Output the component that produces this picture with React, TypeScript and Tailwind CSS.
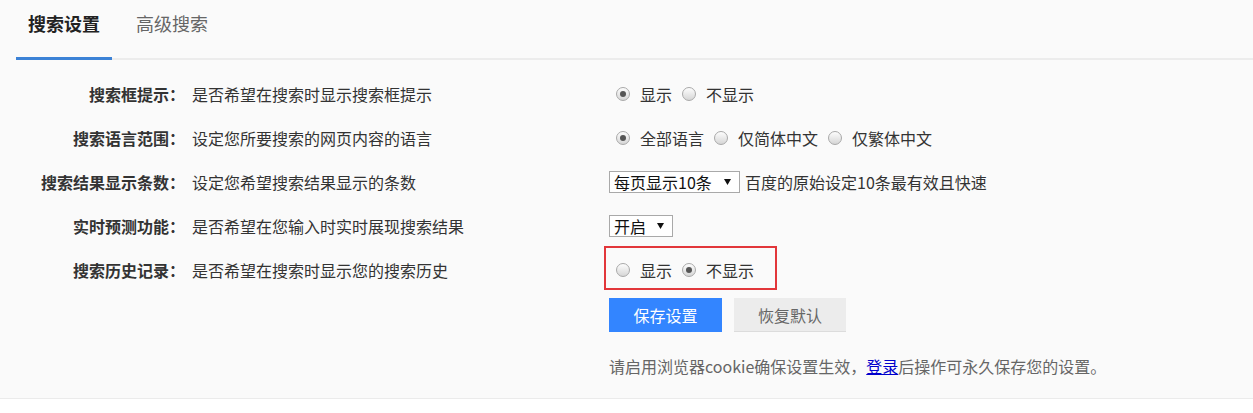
const font = { fontFamily: '"Noto Sans CJK SC", "Noto Sans", sans-serif' };

const Radio = ({ checked }: { checked?: boolean }) => (
  <span className="inline-flex h-[14px] w-[14px] shrink-0 items-center justify-center rounded-full border border-[#a9a9a9] bg-gradient-to-b from-[#fdfdfd] to-[#d6d6d6]">
    {checked && <span className="h-[6px] w-[6px] rounded-full bg-[#555]" />}
  </span>
);

interface Option {
  label: string;
  checked?: boolean;
}

const RadioGroup = ({ options }: { options: Option[] }) => (
  <div className="flex items-center pl-[7px]">
    {options.map((o) => (
      <label key={o.label} className="mr-[10px] flex items-center">
        <Radio checked={o.checked} />
        <span className="ml-[10px] text-[16px] text-[#333]">{o.label}</span>
      </label>
    ))}
  </div>
);

const Arrow = () => (
  <svg width="7" height="6" viewBox="0 0 7 6" className="ml-auto">
    <path d="M0 0 L7 0 L3.5 6 Z" fill="#111" />
  </svg>
);

const FakeSelect = ({ value, width }: { value: string; width: string }) => (
  <div
    className={`flex h-[22px] items-center border border-[#a9a9a9] bg-white pl-[4px] pr-[8px] text-[16px] leading-none text-[#111] ${width}`}
  >
    <span>{value}</span>
    <Arrow />
  </div>
);

interface Row {
  label: string;
  desc: string;
  control: React.ReactNode;
  marked?: boolean;
}

const rows: Row[] = [
  {
    label: "搜索框提示：",
    desc: "是否希望在搜索时显示搜索框提示",
    control: <RadioGroup options={[{ label: "显示", checked: true }, { label: "不显示" }]} />,
  },
  {
    label: "搜索语言范围：",
    desc: "设定您所要搜索的网页内容的语言",
    control: (
      <RadioGroup
        options={[{ label: "全部语言", checked: true }, { label: "仅简体中文" }, { label: "仅繁体中文" }]}
      />
    ),
  },
  {
    label: "搜索结果显示条数：",
    desc: "设定您希望搜索结果显示的条数",
    control: (
      <div className="flex items-center">
        <FakeSelect value="每页显示10条" width="w-[131px]" />
        <span className="ml-[5px] text-[16px] text-[#333]">百度的原始设定10条最有效且快速</span>
      </div>
    ),
  },
  {
    label: "实时预测功能：",
    desc: "是否希望在您输入时实时展现搜索结果",
    control: <FakeSelect value="开启" width="w-[64px]" />,
  },
  {
    label: "搜索历史记录：",
    desc: "是否希望在搜索时显示您的搜索历史",
    control: <RadioGroup options={[{ label: "显示" }, { label: "不显示", checked: true }]} />,
    marked: true,
  },
];

export default function App() {
  return (
    <div style={font} className="w-[1253px] bg-white">
      <div className="h-[399px] border-b border-[#ebebeb] bg-[#fafafa]">
        {/* tabs */}
        <div className="ml-[16px] flex h-[60px] border-b-2 border-[#ececec]">
          <div className="relative flex items-center px-[12px] pb-[11px] text-[18px] font-bold text-[#222]">
            搜索设置
            <span className="absolute bottom-[-2px] left-0 right-0 h-[3px] bg-[#3c82d6]" />
          </div>
          <div className="ml-[12px] flex items-center px-[12px] pb-[11px] text-[18px] text-[#666]">高级搜索</div>
        </div>

        <div className="pt-[12px]">
          {rows.map((r) => (
            <div key={r.label} className="flex h-[44px] items-center">
              <div className="w-[185px] text-right text-[16px] font-bold text-[#333]">{r.label}</div>
              <div className="ml-[7px] w-[417px] text-[16px] text-[#333]">{r.desc}</div>
              <div className="relative flex h-full items-center">
                {r.control}
                {r.marked && (
                  <span className="absolute left-[-5px] top-[-2px] h-[44px] w-[173px] border-2 border-[#e2363a]" />
                )}
              </div>
            </div>
          ))}

          <div className="ml-[609px] mt-[6px] flex gap-[12px]">
            <button className="h-[34px] w-[113px] bg-[#3385ff] text-[16px] text-white">保存设置</button>
            <button className="h-[34px] w-[112px] border-b border-[#dcdcdc] bg-[#ececec] text-[16px] text-[#666]">
              恢复默认
            </button>
          </div>

          <p className="ml-[609px] mt-[22px] text-[16px] leading-[24px] text-[#666]">
            请启用浏览器cookie确保设置生效，
            <a className="text-[#0000cc] underline">登录</a>
            后操作可永久保存您的设置。
          </p>
        </div>
      </div>
      <div className="h-[14px]" />
    </div>
  );
}
